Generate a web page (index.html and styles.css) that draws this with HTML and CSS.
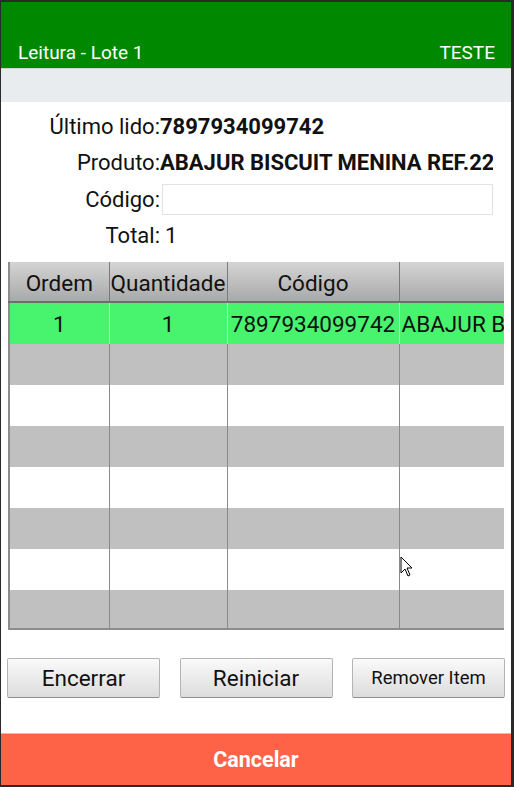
FILE: index.html
```html
<!DOCTYPE html>
<html lang="pt">
<head>
<meta charset="utf-8">
<title>Leitura - Lote 1</title>
<link rel="stylesheet" href="styles.css">
</head>
<body>
<div class="app">
  <header class="topbar">
    <span class="title">Leitura - Lote 1</span>
    <span class="user">TESTE</span>
  </header>
  <div class="subbar"></div>
  <main class="content">
    <div class="form">
      <div class="lbl">Último lido:</div><div class="val bold">7897934099742</div>
      <div class="lbl">Produto:</div><div class="val bold">ABAJUR BISCUIT MENINA REF.22</div>
      <div class="lbl">Código:</div><div class="val"><div class="input"></div></div>
      <div class="lbl">Total:</div><div class="val total">1</div>
    </div>
    <div class="grid-wrap">
      <table class="grid">
        <colgroup><col class="c1"><col class="c2"><col class="c3"><col class="c4"></colgroup>
        <thead>
          <tr><th>Ordem</th><th>Quantidade</th><th>Código</th><th></th></tr>
        </thead>
        <tbody>
          <tr class="sel"><td>1</td><td>1</td><td>7897934099742</td><td class="left">ABAJUR B</td></tr>
          <tr class="g"><td></td><td></td><td></td><td></td></tr>
          <tr class="w"><td></td><td></td><td></td><td></td></tr>
          <tr class="g"><td></td><td></td><td></td><td></td></tr>
          <tr class="w"><td></td><td></td><td></td><td></td></tr>
          <tr class="g"><td></td><td></td><td></td><td></td></tr>
          <tr class="w"><td></td><td></td><td></td><td></td></tr>
          <tr class="g last"><td></td><td></td><td></td><td></td></tr>
        </tbody>
      </table>
      <svg class="cursor" width="14" height="22" viewBox="0 0 14 22"><path d="M1 1 L1 17 L5 13 L8 20 L10 19 L7 12 L12 12 Z" fill="#fff" stroke="#000" stroke-width="1"/></svg>
    </div>
    <div class="buttons">
      <button class="btn">Encerrar</button>
      <button class="btn">Reiniciar</button>
      <button class="btn small">Remover Item</button>
    </div>
  </main>
  <footer class="cancel">Cancelar</footer>
</div>
</body>
</html>
```
FILE: styles.css
```css
html, body {
  margin: 0;
  padding: 0;
  background: #2a2a2a;
}
body {
  width: 514px;
  height: 787px;
  overflow: hidden;
  font-family: Roboto, "Noto Sans", sans-serif;
}
.app {
  margin: 2px 3px 0 1px;
  height: 783px;
  background: #fff;
  display: flex;
  flex-direction: column;
}
.topbar {
  height: 67px;
  background: #008800;
  color: #fff;
  display: flex;
  justify-content: space-between;
  align-items: flex-end;
  padding: 0 16px 4px 17px;
  box-sizing: border-box;
  font-size: 19px;
  border-bottom: 1px solid #c6dcc6;
}
.subbar {
  height: 33px;
  background: #e9ecef;
}
.content {
  flex: 1;
  display: flex;
  flex-direction: column;
}
.form {
  display: grid;
  grid-template-columns: 159px 1fr;
  grid-template-rows: 36px 36px 38px 34px;
  align-items: center;
  padding: 6px 18px 0 0;
  font-size: 22px;
  color: #111;
}
.lbl {
  text-align: right;
}
.val {
  white-space: nowrap;
  overflow: hidden;
}
.bold {
  font-weight: bold;
}
.total {
  padding-left: 5px;
}
.input {
  height: 29px;
  margin-left: 2px;
  border: 1px solid #e2e2e2;
  background: #fff;
}
.grid-wrap {
  position: relative;
  margin: 10px 0 0 7px;
  width: 495px;
}
.grid {
  width: 495px;
  table-layout: fixed;
  border-collapse: collapse;
  font-size: 22.5px;
  color: #111;
  border-left: 2px solid #8c8c8c;
  border-bottom: 2px solid #8c8c8c;
}
.c1 { width: 100px; }
.c2 { width: 118px; }
.c3 { width: 172px; }
.c4 { width: 105px; }
.grid th {
  height: 37px;
  font-weight: normal;
  background: linear-gradient(#d4d4d4, #a9a9a9);
  border-right: 1px solid #7a7a7a;
  border-bottom: 2px solid #6e6e6e;
  padding: 2px 0 0;
  white-space: nowrap;
  overflow: hidden;
}
.grid td {
  height: 41px;
  padding: 0;
  text-align: center;
  border-right: 1px solid #8a8a8a;
  white-space: nowrap;
  overflow: hidden;
}
.grid td:last-child, .grid th:last-child {
  border-right: none;
}
.grid td.left {
  text-align: left;
  padding-left: 2px;
}
.grid tr.sel td {
  background: #48f46e;
  border-right-color: #b8f5c4;
}
.grid tr.sel td:last-child {
  border-right: none;
}
.grid tr.g td { background: #c0c0c0; }
.grid tr.w td { background: #fff; }
.grid tr.last td { height: 38px; }
.cursor {
  position: absolute;
  left: 392px;
  top: 294px;
}
.buttons {
  display: flex;
  justify-content: space-between;
  padding: 28px 6px 0 6px;
}
.btn {
  width: 153px;
  height: 40px;
  font-family: Roboto, "Noto Sans", sans-serif;
  font-size: 22.5px;
  color: #111;
  background: linear-gradient(#fafafa, #dcdcdc);
  border: 1px solid #b4b4b4;
  border-bottom-color: #8e8e8e;
  border-radius: 2px;
  padding: 0;
}
.btn.small {
  font-size: 18.5px;
}
.cancel {
  margin-top: auto;
  height: 51px;
  background: #ff6347;
  color: #fff;
  font-weight: bold;
  font-size: 21.5px;
  display: flex;
  align-items: center;
  justify-content: center;
  border-top: 1px solid #ffb0a0;
}
```
